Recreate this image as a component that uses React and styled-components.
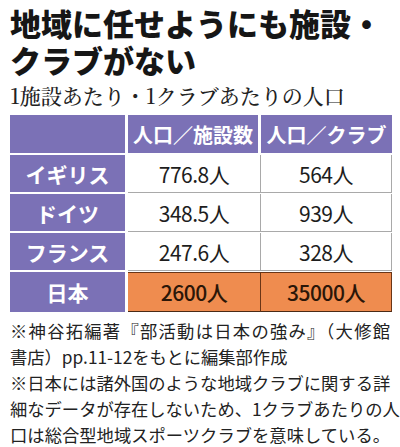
import React from 'react';
import styled, { createGlobalStyle } from 'styled-components';

const GlobalStyle = createGlobalStyle`
  body {
    margin: 0;
    background: #ffffff;
    font-family: "Noto Sans CJK JP", "Noto Sans", sans-serif;
    color: #1d1d1d;
  }
`;

const Page = styled.div`
  width: 400px;
  height: 447px;
  padding: 4px 8px 0 10px;
  box-sizing: border-box;
  overflow: hidden;
`;

const Title = styled.h1`
  margin: 0;
  font-size: 31px;
  font-weight: 900;
  line-height: 37px;
  color: #161616;
`;

const Subtitle = styled.h2`
  margin: 5px 0 8px;
  font-family: "Noto Serif CJK JP", "Liberation Serif", "Noto Sans CJK JP", serif;
  font-size: 21px;
  font-weight: 500;
  line-height: 24px;
  color: #222;
`;

const Table = styled.div`
  display: grid;
  grid-template-columns: 118px 133px 131px;
  width: 382px;
`;

const NameCell = styled.div`
  background: #7b71b6;
  color: #ffffff;
  font-weight: 700;
  font-size: 21px;
  height: ${p => (p.$last ? 40 : p.$head ? 38 : 37)}px;
  display: flex;
  align-items: center;
  justify-content: center;
  border-right: 3px solid #ffffff;
  border-bottom: ${p => (p.$last ? '0' : '2px solid #ffffff')};
`;

const HeadCell = styled.div`
  background: #7b71b6;
  color: #ffffff;
  font-weight: 700;
  font-size: 20px;
  height: 38px;
  display: flex;
  align-items: center;
  justify-content: center;
  border-right: ${p => (p.$mid ? '3px solid #ffffff' : '0')};
  border-bottom: 2px solid #ffffff;
`;

const ValueCell = styled.div`
  background: ${p => (p.$hot ? '#ef8c4f' : '#ffffff')};
  color: ${p => (p.$hot ? '#2b1608' : '#1d1d1d')};
  font-weight: ${p => (p.$hot ? 500 : 400)};
  font-size: 21px;
  height: ${p => (p.$hot ? 40 : 37)}px;
  box-sizing: ${p => (p.$hot ? 'border-box' : 'content-box')};
  display: flex;
  align-items: center;
  justify-content: center;
  letter-spacing: -0.5px;
  border-right: 1px solid ${p => (p.$hot ? '#6a3516' : '#a9a9a9')};
  border-bottom: 1px solid ${p => (p.$hot ? '#4a2a16' : '#a9a9a9')};
  border-top: ${p => (p.$hot ? '1px solid #6a3516' : '0')};
  margin-bottom: ${p => (p.$hot ? 0 : 1)}px;
`;

const Notes = styled.div`
  margin-top: 6px;
  width: 380px;
  font-size: 17.3px;
  line-height: 26px;
  color: #222;
`;

const Line = styled.div`
  white-space: nowrap;
  text-align: ${p => (p.$full ? 'justify' : 'left')};
  text-align-last: ${p => (p.$full ? 'justify' : 'left')};
  text-justify: inter-character;
`;

const rows = [
  { name: 'イギリス', a: '776.8人', b: '564人' },
  { name: 'ドイツ', a: '348.5人', b: '939人' },
  { name: 'フランス', a: '247.6人', b: '328人' },
];

export default function App() {
  return (
    <Page>
      <GlobalStyle />
      <Title>
        地域に任せようにも施設・
        <br />
        クラブがない
      </Title>
      <Subtitle>1施設あたり・1クラブあたりの人口</Subtitle>
      <Table>
        <NameCell $head />
        <HeadCell $mid>人口／施設数</HeadCell>
        <HeadCell>人口／クラブ</HeadCell>
        {rows.map(r => (
          <React.Fragment key={r.name}>
            <NameCell>{r.name}</NameCell>
            <ValueCell>{r.a}</ValueCell>
            <ValueCell>{r.b}</ValueCell>
          </React.Fragment>
        ))}
        <NameCell $last>日本</NameCell>
        <ValueCell $hot>2600人</ValueCell>
        <ValueCell $hot>35000人</ValueCell>
      </Table>
      <Notes>
        <Line $full>※神谷拓編著『部活動は日本の強み』（大修館</Line>
        <Line>書店）pp.11-12をもとに編集部作成</Line>
        <Line $full>※日本には諸外国のような地域クラブに関する詳</Line>
        <Line $full>細なデータが存在しないため、1クラブあたりの人</Line>
        <Line $full>口は総合型地域スポーツクラブを意味している。</Line>
      </Notes>
    </Page>
  );
}
